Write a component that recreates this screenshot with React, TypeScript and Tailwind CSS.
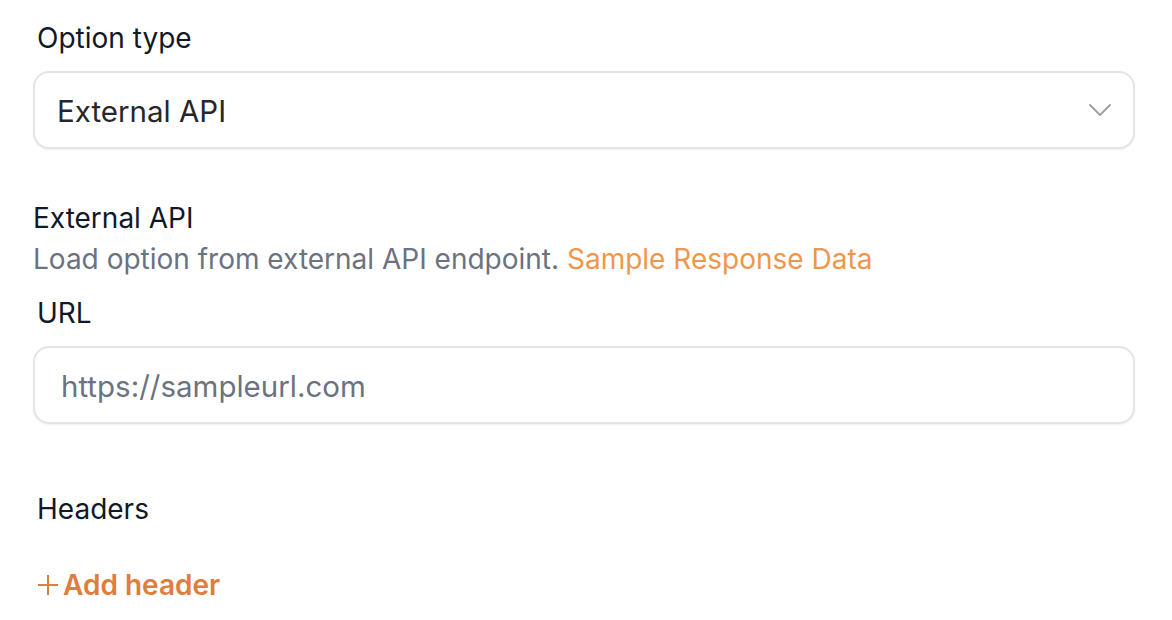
import React from "react";

export default function App() {
  return (
    <div className="w-[1172px] h-[620px] bg-white overflow-hidden" style={{ fontFamily: "Inter, 'Noto Sans', sans-serif" }}>
      <div className="pl-[33px] pr-[37px] pt-[20px]">
        <div className="pl-[4px] h-[36px] flex items-center text-[28px] text-[#111827]">Option type</div>
        <div className="mt-[15px] h-[78px] rounded-[16px] border-2 border-[#e4e4e7] shadow-[0_1px_2px_rgba(0,0,0,0.06)] flex items-center justify-between pl-[22px] pr-[22px]">
          <span className="text-[29.5px] text-[#27272a] mt-[2px]">External API</span>
          <svg width="22" height="14" viewBox="0 0 22 14" fill="none">
            <path d="M1 2 L11 12 L21 2" stroke="#a1a1aa" strokeWidth="2" strokeLinecap="round" strokeLinejoin="round" />
          </svg>
        </div>
        <div className="mt-[51px] h-[36px] flex items-center text-[28px] text-[#111827]">External API</div>
        <div className="mt-[5px] h-[36px] flex items-center text-[28px] text-[#6b7280]">
          Load option from external API endpoint.&nbsp;<span className="text-[#f0964c]">Sample Response Data</span>
        </div>
        <div className="mt-[18px] pl-[4px] h-[36px] flex items-center text-[28px] text-[#111827]">URL</div>
        <div className="mt-[15px] h-[78px] rounded-[16px] border-2 border-[#e4e4e7] shadow-[0_1px_2px_rgba(0,0,0,0.06)] flex items-center pl-[26px]">
          <span className="text-[29.5px] text-[#6b7280] mt-[2px]">https://sampleurl.com</span>
        </div>
        <div className="mt-[67px] pl-[4px] h-[36px] flex items-center text-[28px] text-[#111827]">Headers</div>
        <div className="mt-[40px] pl-[4px] h-[36px] flex items-center text-[28px] font-semibold text-[#e07d3c]">
          <svg width="22" height="22" viewBox="0 0 22 22" fill="none" className="mr-[4px]">
            <path d="M11 1 V21 M1 11 H21" stroke="#e07d3c" strokeWidth="2" />
          </svg>
          Add header
        </div>
      </div>
    </div>
  );
}
